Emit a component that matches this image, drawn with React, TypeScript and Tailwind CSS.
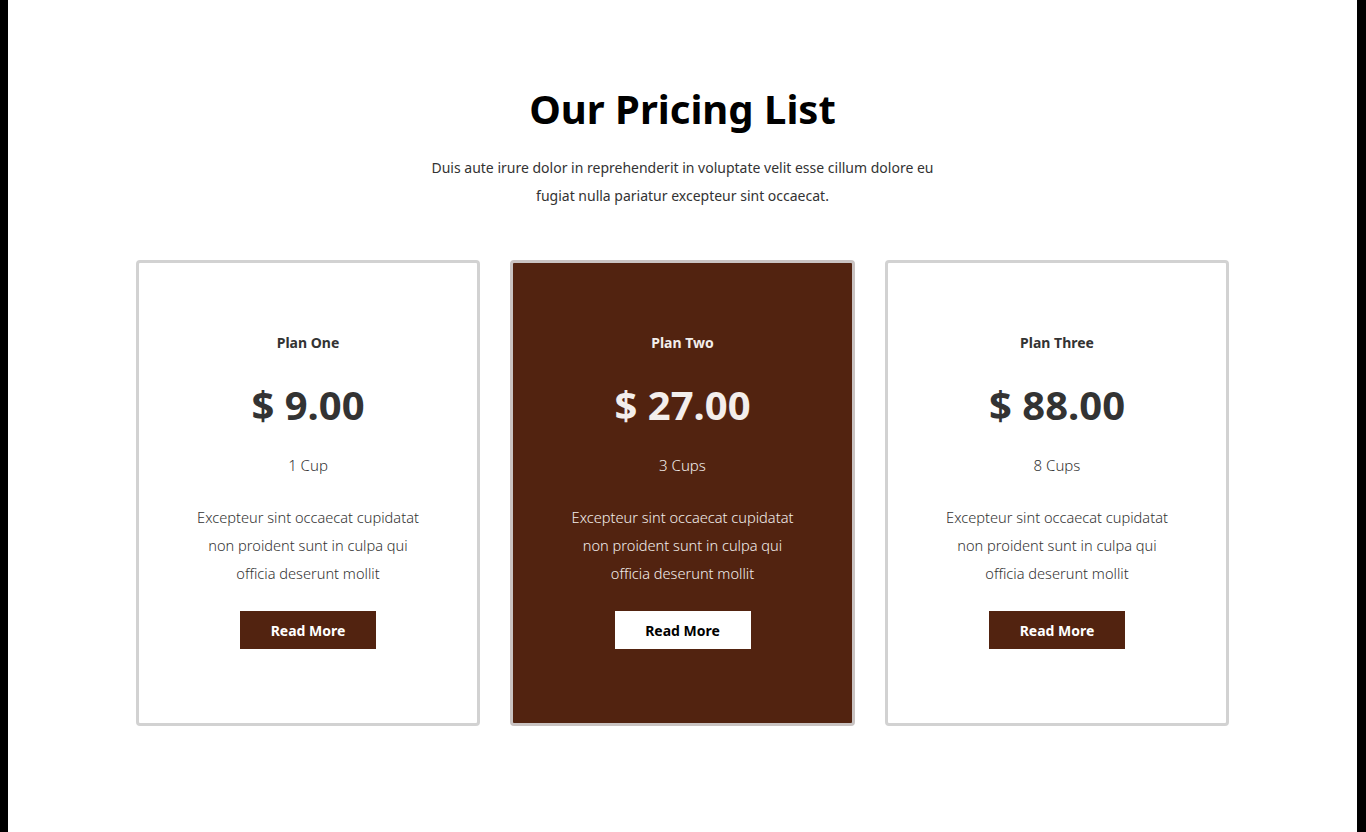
const plans = [
  { name: "Plan One", price: "$ 9.00", cups: "1 Cup", featured: false },
  { name: "Plan Two", price: "$ 27.00", cups: "3 Cups", featured: true },
  { name: "Plan Three", price: "$ 88.00", cups: "8 Cups", featured: false },
];

function PlanCard({ name, price, cups, featured }: (typeof plans)[number]) {
  return (
    <div
      className={
        featured
          ? "w-[345px] h-[466px] rounded-[4px] border-[3px] border-[#c9c3c2] bg-[#522310] text-[#f3eeec] flex flex-col items-center pt-[68px]"
          : "w-[344px] h-[466px] rounded-[4px] border-[3px] border-[#d2d2d2] bg-white text-[#333333] flex flex-col items-center pt-[68px]"
      }
    >
      <h3 className="text-[14px] leading-[24px] font-bold">{name}</h3>
      <div className="mt-[26px] text-[40px] leading-[48px] font-bold">{price}</div>
      <div className="mt-[24px] text-[15px] leading-[24px] font-light">{cups}</div>
      <p className="mt-[26px] text-[14.6px] leading-[28px] font-light text-center">
        <span className="block">Excepteur sint occaecat cupidatat</span>
        <span className="block">non proident sunt in culpa qui</span>
        <span className="block">officia deserunt mollit</span>
      </p>
      <a
        href="#"
        className={
          featured
            ? "mt-[24px] w-[136px] h-[38px] flex items-center justify-center bg-white text-black text-[14px] font-bold"
            : "mt-[24px] w-[136px] h-[38px] flex items-center justify-center bg-[#522310] text-white text-[14px] font-bold"
        }
      >
        Read More
      </a>
    </div>
  );
}

export default function App() {
  return (
    <div
      className="w-full h-[832px] bg-black pl-[8px] pr-[9px]"
      style={{ fontFamily: '"Noto Sans", "Open Sans", sans-serif' }}
    >
      <section className="h-full bg-white flex flex-col items-center pt-[82px]">
        <h2 className="text-[40px] leading-[53px] font-bold text-black">Our Pricing List</h2>
        <p className="mt-[19px] text-[14px] leading-[28px] text-[#333333] text-center">
          <span className="block">Duis aute irure dolor in reprehenderit in voluptate velit esse cillum dolore eu</span>
          <span className="block">fugiat nulla pariatur excepteur sint occaecat.</span>
        </p>
        <div className="mt-[50px] flex gap-[30px]">
          {plans.map((p) => (
            <PlanCard key={p.name} {...p} />
          ))}
        </div>
      </section>
    </div>
  );
}
